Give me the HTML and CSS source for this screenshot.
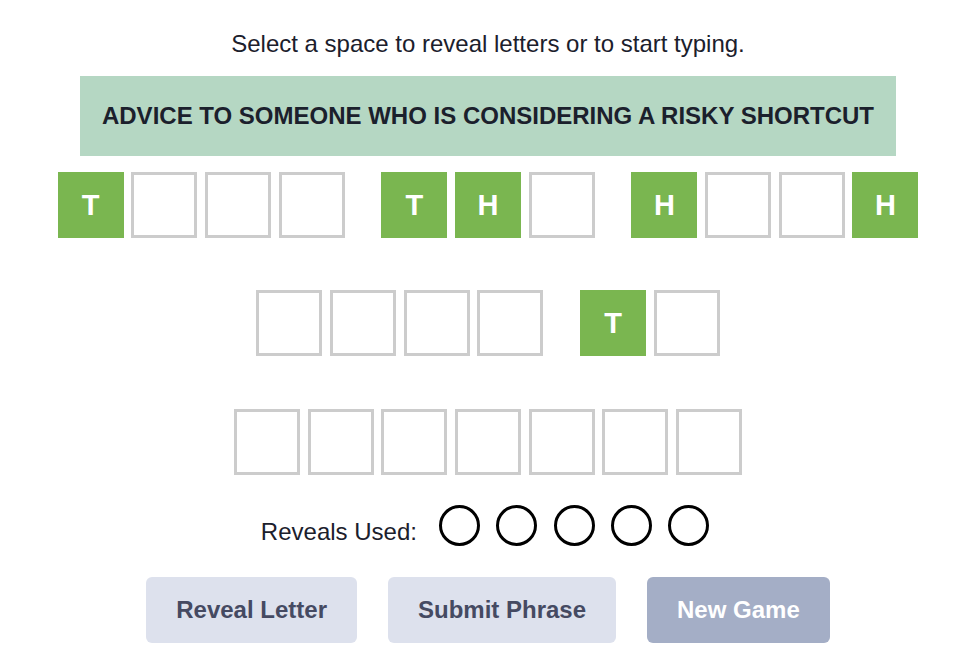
FILE: index.html
```html
<!DOCTYPE html>
<html lang="en">
<head>
<meta charset="utf-8">
<title>Phrase Puzzle</title>
<link rel="stylesheet" href="styles.css">
</head>
<body>
<main class="app">
  <p class="hint">Select a space to reveal letters or to start typing.</p>
  <div class="clue">ADVICE TO SOMEONE WHO IS CONSIDERING A RISKY SHORTCUT</div>

  <div class="line line-first">
    <div class="word">
      <div class="tile filled">T</div><div class="tile"></div><div class="tile"></div><div class="tile"></div>
    </div>
    <div class="word">
      <div class="tile filled">T</div><div class="tile filled">H</div><div class="tile"></div>
    </div>
    <div class="word">
      <div class="tile filled">H</div><div class="tile"></div><div class="tile"></div><div class="tile filled">H</div>
    </div>
  </div>

  <div class="line line-second">
    <div class="word">
      <div class="tile"></div><div class="tile"></div><div class="tile"></div><div class="tile"></div>
    </div>
    <div class="word">
      <div class="tile filled">T</div><div class="tile"></div>
    </div>
  </div>

  <div class="line line-third">
    <div class="word">
      <div class="tile"></div><div class="tile"></div><div class="tile"></div><div class="tile"></div><div class="tile"></div><div class="tile"></div><div class="tile"></div>
    </div>
  </div>

  <div class="reveals">
    <span class="reveals-label">Reveals Used:</span>
    <div class="dots">
      <span class="dot"></span><span class="dot"></span><span class="dot"></span><span class="dot"></span><span class="dot"></span>
    </div>
  </div>

  <div class="actions">
    <button class="btn">Reveal Letter</button>
    <button class="btn">Submit Phrase</button>
    <button class="btn btn-primary">New Game</button>
  </div>
</main>
</body>
</html>
```

FILE: styles.css
```css
* { box-sizing: border-box; }

html, body {
  margin: 0;
  padding: 0;
  background: #ffffff;
}

body {
  font-family: "Liberation Sans", Arial, sans-serif;
  color: #1b202c;
}

.app {
  display: flex;
  flex-direction: column;
  align-items: center;
  padding-top: 30px;
}

.hint {
  margin: 0;
  font-size: 24px;
  line-height: 28px;
  color: #1b202c;
}

.clue {
  margin-top: 18px;
  background: #b5d7c3;
  padding: 26px 22px;
  font-size: 24px;
  line-height: 28px;
  font-weight: 700;
  color: #1b202c;
  white-space: nowrap;
}

.line {
  display: flex;
  gap: 36.8px;
  justify-content: center;
}

.line-first { margin-top: 16px; }
.line-second { margin-top: 52px; }
.line-third { margin-top: 53px; }

.word {
  display: flex;
  gap: 7.67px;
}

.tile {
  width: 66px;
  height: 66px;
  border: 3px solid #cccccc;
  background: #ffffff;
  display: flex;
  align-items: center;
  justify-content: center;
  font-size: 29px;
  font-weight: 700;
  color: #ffffff;
}

.tile.filled {
  background: #7ab650;
  border-color: #7ab650;
}

.reveals {
  margin-top: 30px;
  display: flex;
  align-items: center;
  gap: 22px;
  padding-right: 6px;
}

.reveals-label {
  font-size: 24px;
  line-height: 28px;
  padding-top: 12px;
  color: #1b202c;
}

.dots {
  display: flex;
  gap: 16.3px;
}

.dot {
  width: 41px;
  height: 41px;
  border: 3px solid #000000;
  border-radius: 50%;
  display: block;
}

.actions {
  margin-top: 31px;
  display: flex;
  gap: 31px;
}

.btn {
  height: 66px;
  padding: 0 30px;
  border: none;
  border-radius: 6px;
  background: #dde1ed;
  color: #454a62;
  font-family: "Liberation Sans", Arial, sans-serif;
  font-size: 24px;
  font-weight: 700;
  cursor: pointer;
}

.btn-primary {
  background: #a4aec6;
  color: #ffffff;
}
```
